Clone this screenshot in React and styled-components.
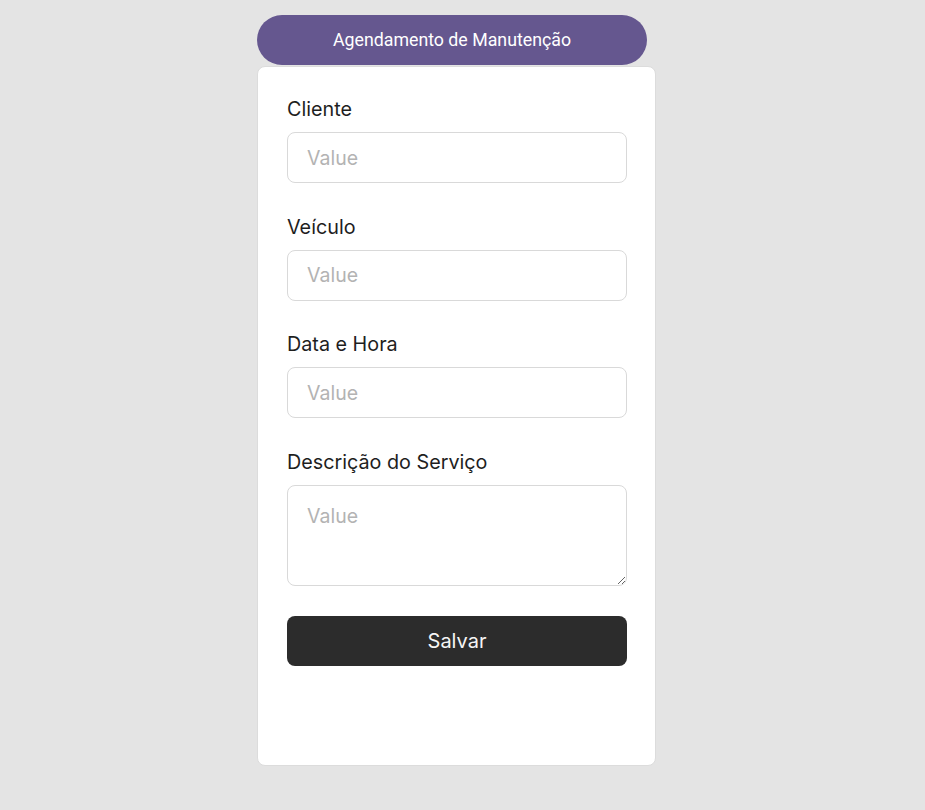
import styled, { createGlobalStyle } from "styled-components";

const GlobalStyle = createGlobalStyle`
  body {
    margin: 0;
    background: #e4e4e4;
    font-family: Inter, "Noto Sans", sans-serif;
  }
`;

const Page = styled.div`
  display: flex;
  flex-direction: column;
  align-items: flex-start;
  padding: 15px 0 44px 257px;
`;

const Header = styled.div`
  width: 390px;
  height: 50px;
  border-radius: 25px;
  background: #65578f;
  color: #fff;
  font-family: Roboto, sans-serif;
  font-size: 17.75px;
  display: flex;
  align-items: center;
  justify-content: center;
`;

const Card = styled.form`
  box-sizing: border-box;
  width: 399px;
  height: 700px;
  margin: 1px 0 0 0;
  padding: 31px 28px 31px 29px;
  background: #fff;
  border: 1px solid #dcdcdc;
  border-radius: 8px;
  display: flex;
  flex-direction: column;
  gap: 32.5px;
`;

const Field = styled.div`
  display: flex;
  flex-direction: column;
  gap: 12px;
`;

const Label = styled.label`
  font-size: 19.75px;
  line-height: 22px;
  color: #1e1e1e;
`;

const Input = styled.input`
  box-sizing: border-box;
  width: 340px;
  height: 51px;
  padding: 0 19px;
  border: 1px solid #d9d9d9;
  border-radius: 8px;
  font-family: Inter, sans-serif;
  font-size: 19.5px;
  color: #1e1e1e;
  outline: none;
  &::placeholder {
    color: #b3b3b3;
  }
`;

const TextArea = styled.textarea`
  box-sizing: border-box;
  width: 340px;
  height: 101px;
  padding: 18px 19px;
  border: 1px solid #d9d9d9;
  border-radius: 8px;
  font-family: Inter, sans-serif;
  font-size: 19.5px;
  color: #1e1e1e;
  outline: none;
  &::placeholder {
    color: #b3b3b3;
  }
`;

const Button = styled.button`
  width: 340px;
  height: 50px;
  margin-top: -2.5px;
  border: none;
  border-radius: 8px;
  background: #2c2c2c;
  color: #f5f5f5;
  font-family: Inter, sans-serif;
  font-size: 20px;
`;

const fields = ["Cliente", "Veículo", "Data e Hora"];

function App() {
  return (
    <Page>
      <GlobalStyle />
      <Header>Agendamento de Manutenção</Header>
      <Card onSubmit={(e) => e.preventDefault()}>
        {fields.map((f) => (
          <Field key={f}>
            <Label>{f}</Label>
            <Input placeholder="Value" />
          </Field>
        ))}
        <Field>
          <Label>Descrição do Serviço</Label>
          <TextArea placeholder="Value" />
        </Field>
        <Button type="submit">Salvar</Button>
      </Card>
    </Page>
  );
}

export default App;
